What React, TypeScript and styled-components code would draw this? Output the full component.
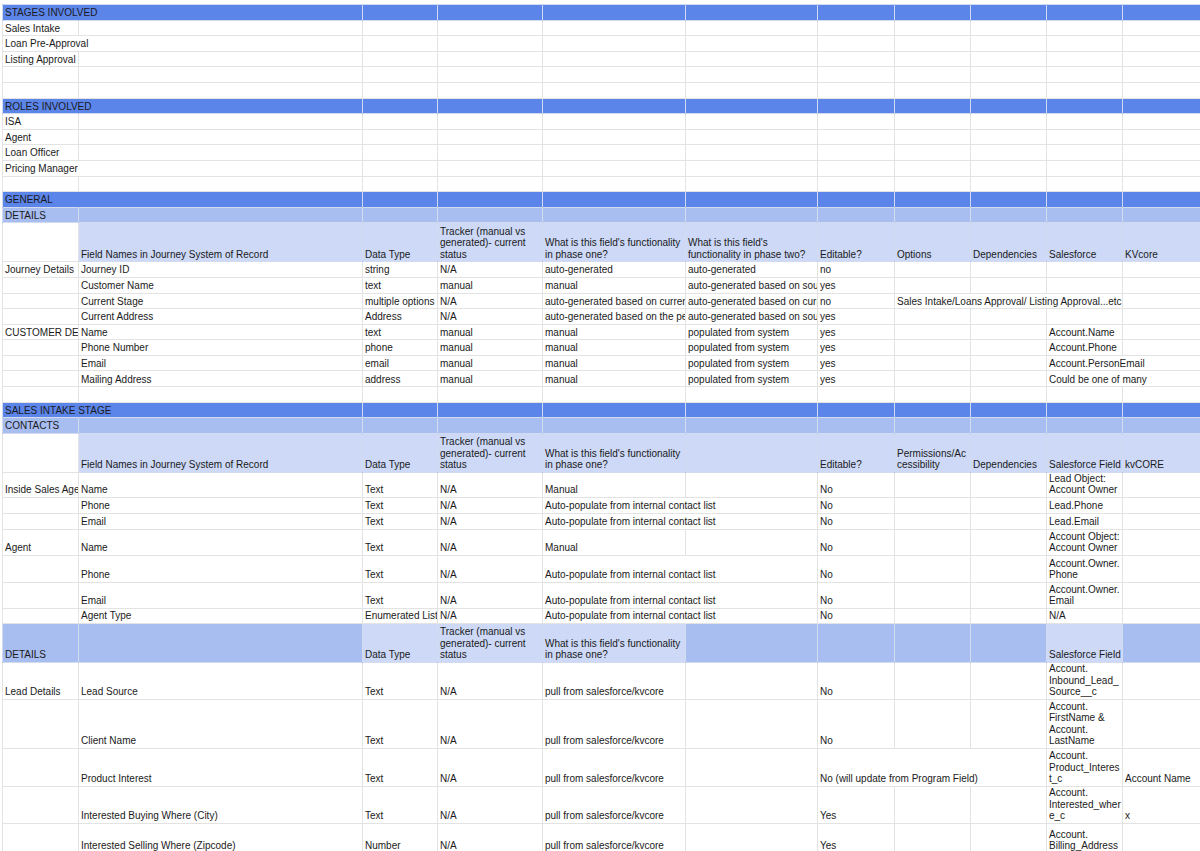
import React from "react";
import styled, { createGlobalStyle } from "styled-components";

const Global = createGlobalStyle`
  body { margin: 0; background: #fff; }
`;

const WIDTHS = [76, 284, 75, 105, 143, 132, 77, 76, 76, 76, 79];

const Sheet = styled.table`
  margin: 4px 0 0 2px;
  border-collapse: collapse;
  table-layout: fixed;
  width: 1200px;
  font-family: "Liberation Sans", Arial, sans-serif;
  font-size: 10px;
  color: #1a1a1a;
`;

type Tone = "white" | "band" | "sub" | "head";
const fills: Record<Tone, string> = {
  white: "#ffffff",
  band: "#5c85ea",
  sub: "#a8bdf0",
  head: "#cdd9f7",
};

const Cell = styled.td<{ $tone: Tone }>`
  background: ${(p) => fills[p.$tone]};
  border: 1px solid ${(p) => (p.$tone === "white" ? "#e3e3e3" : "rgba(80,110,200,0.25)")};
  padding: 0 2px 1px 2px;
  vertical-align: bottom;
  white-space: nowrap;
  overflow: hidden;
  line-height: 11.5px;
`;

const SheetTr = styled.tr<{ $h: number }>`
  height: ${(p) => p.$h}px;
`;

type C = string | [string, number];
type R = { h: number; tone: Tone; cells: C[]; tones?: Tone[] };

const blank = (): R => ({ h: 15.6, tone: "white", cells: [] });
const d = (cells: C[], h = 15.6): R => ({ h, tone: "white", cells });
const band = (t: string): R => ({ h: 15.6, tone: "band", cells: [[t, 2]] });
const sub = (t: string): R => ({ h: 15.6, tone: "sub", cells: [t] });

const tracker = "Tracker (manual vs\ngenerated)- current\nstatus";
const phaseOne = "What is this field's functionality\nin phase one?";

const headGeneral = [
  "", "Field Names in Journey System of Record", "Data Type", tracker, phaseOne,
  "What is this field's\nfunctionality in phase two?", "Editable?", "Options", "Dependencies", "Salesforce", "KVcore",
];

const headContacts = [
  "", "Field Names in Journey System of Record", "Data Type", tracker, phaseOne,
  "", "Editable?", "Permissions/Ac\ncessibility", "Dependencies", "Salesforce Field", "kvCORE",
];

const headDetails = ["DETAILS", "", "Data Type", tracker, phaseOne, "", "", "", "", "Salesforce Field", ""];

const auto = "Auto-populate from internal contact list";
const pull = "pull from salesforce/kvcore";

const rows: R[] = [
  band("STAGES INVOLVED"),
  d(["Sales Intake"]),
  d([["Loan Pre-Approval", 2]]),
  d(["Listing Approval"]),
  blank(),
  blank(),
  band("ROLES INVOLVED"),
  d(["ISA"]),
  d(["Agent"]),
  d(["Loan Officer"]),
  d([["Pricing Manager", 2]]),
  blank(),
  band("GENERAL"),
  sub("DETAILS"),
  { h: 39, tone: "head", cells: headGeneral, tones: ["white"] },
  d(["Journey Details", "Journey ID", "string", "N/A", "auto-generated", "auto-generated", "no"]),
  d(["", "Customer Name", "text", "manual", "manual", "auto-generated based on source", "yes"]),
  d(["", "Current Stage", "multiple options", "N/A", "auto-generated based on current", "auto-generated based on current", "no", ["Sales Intake/Loans Approval/ Listing Approval...etc", 3]]),
  d(["", "Current Address", "Address", "N/A", "auto-generated based on the pe", "auto-generated based on source", "yes"]),
  d(["CUSTOMER DETAILS", "Name", "text", "manual", "manual", "populated from system", "yes", "", "", "Account.Name"]),
  d(["", "Phone Number", "phone", "manual", "manual", "populated from system", "yes", "", "", "Account.Phone"]),
  d(["", "Email", "email", "manual", "manual", "populated from system", "yes", "", "", ["Account.PersonEmail", 2]]),
  d(["", "Mailing Address", "address", "manual", "manual", "populated from system", "yes", "", "", ["Could be one of many", 2]]),
  blank(),
  band("SALES INTAKE STAGE"),
  sub("CONTACTS"),
  { h: 39, tone: "head", cells: headContacts, tones: ["white"] },
  d(["Inside Sales Agent", "Name", "Text", "N/A", "Manual", "", "No", "", "", "Lead Object:\nAccount Owner"], 25),
  d(["", "Phone", "Text", "N/A", [auto, 2], "No", "", "", "Lead.Phone"], 16),
  d(["", "Email", "Text", "N/A", [auto, 2], "No", "", "", "Lead.Email"], 16),
  d(["Agent", "Name", "Text", "N/A", "Manual", "", "No", "", "", "Account Object:\nAccount Owner"], 26),
  d(["", "Phone", "Text", "N/A", [auto, 2], "No", "", "", "Account.Owner.\nPhone"], 27),
  d(["", "Email", "Text", "N/A", [auto, 2], "No", "", "", "Account.Owner.\nEmail"], 26),
  d(["", "Agent Type", "Enumerated List", "N/A", [auto, 2], "No", "", "", "N/A"], 15),
  {
    h: 39, tone: "head", cells: headDetails,
    tones: ["sub", "sub", "head", "head", "head", "sub", "sub", "sub", "sub", "head", "sub"],
  },
  d(["Lead Details", "Lead Source", "Text", "N/A", pull, "", "No", "", "", "Account.\nInbound_Lead_\nSource__c"], 37),
  d(["", "Client Name", "Text", "N/A", pull, "", "No", "", "", "Account.\nFirstName &\nAccount.\nLastName"], 49),
  d(["", "Product Interest", "Text", "N/A", pull, "", ["No (will update from Program Field)", 3], "Account.\nProduct_Interes\nt_c", "Account Name"], 38),
  d(["", "Interested Buying Where (City)", "Text", "N/A", pull, "", "Yes", "", "", "Account.\nInterested_wher\ne_c", "x"], 37),
  d(["", "Interested Selling Where (Zipcode)", "Number", "N/A", pull, "", "Yes", "", "", "Account.\nBilling_Address"], 30),
];

function Lines({ text }: { text: string }) {
  return (
    <>
      {text.split("\n").map((p, i) => (
        <React.Fragment key={i}>
          {i > 0 && <br />}
          {p}
        </React.Fragment>
      ))}
    </>
  );
}

function SheetRow({ row }: { row: R }) {
  const out: React.ReactNode[] = [];
  let col = 0;
  let i = 0;
  while (col < WIDTHS.length) {
    const c = row.cells[i];
    let text = "";
    let span = 1;
    if (Array.isArray(c)) {
      text = c[0];
      span = c[1];
    } else if (typeof c === "string") text = c;
    const tone = row.tones?.[col] ?? row.tone;
    out.push(
      <Cell key={col} colSpan={span} $tone={tone}>
        <Lines text={text} />
      </Cell>
    );
    col += span;
    i++;
  }
  return <SheetTr $h={row.h}>{out}</SheetTr>;
}

export default function App() {
  return (
    <>
      <Global />
      <Sheet>
        <colgroup>
          {WIDTHS.map((w, i) => (
            <col key={i} width={w} />
          ))}
        </colgroup>
        <tbody>
          {rows.map((r, i) => (
            <SheetRow key={i} row={r} />
          ))}
        </tbody>
      </Sheet>
    </>
  );
}
